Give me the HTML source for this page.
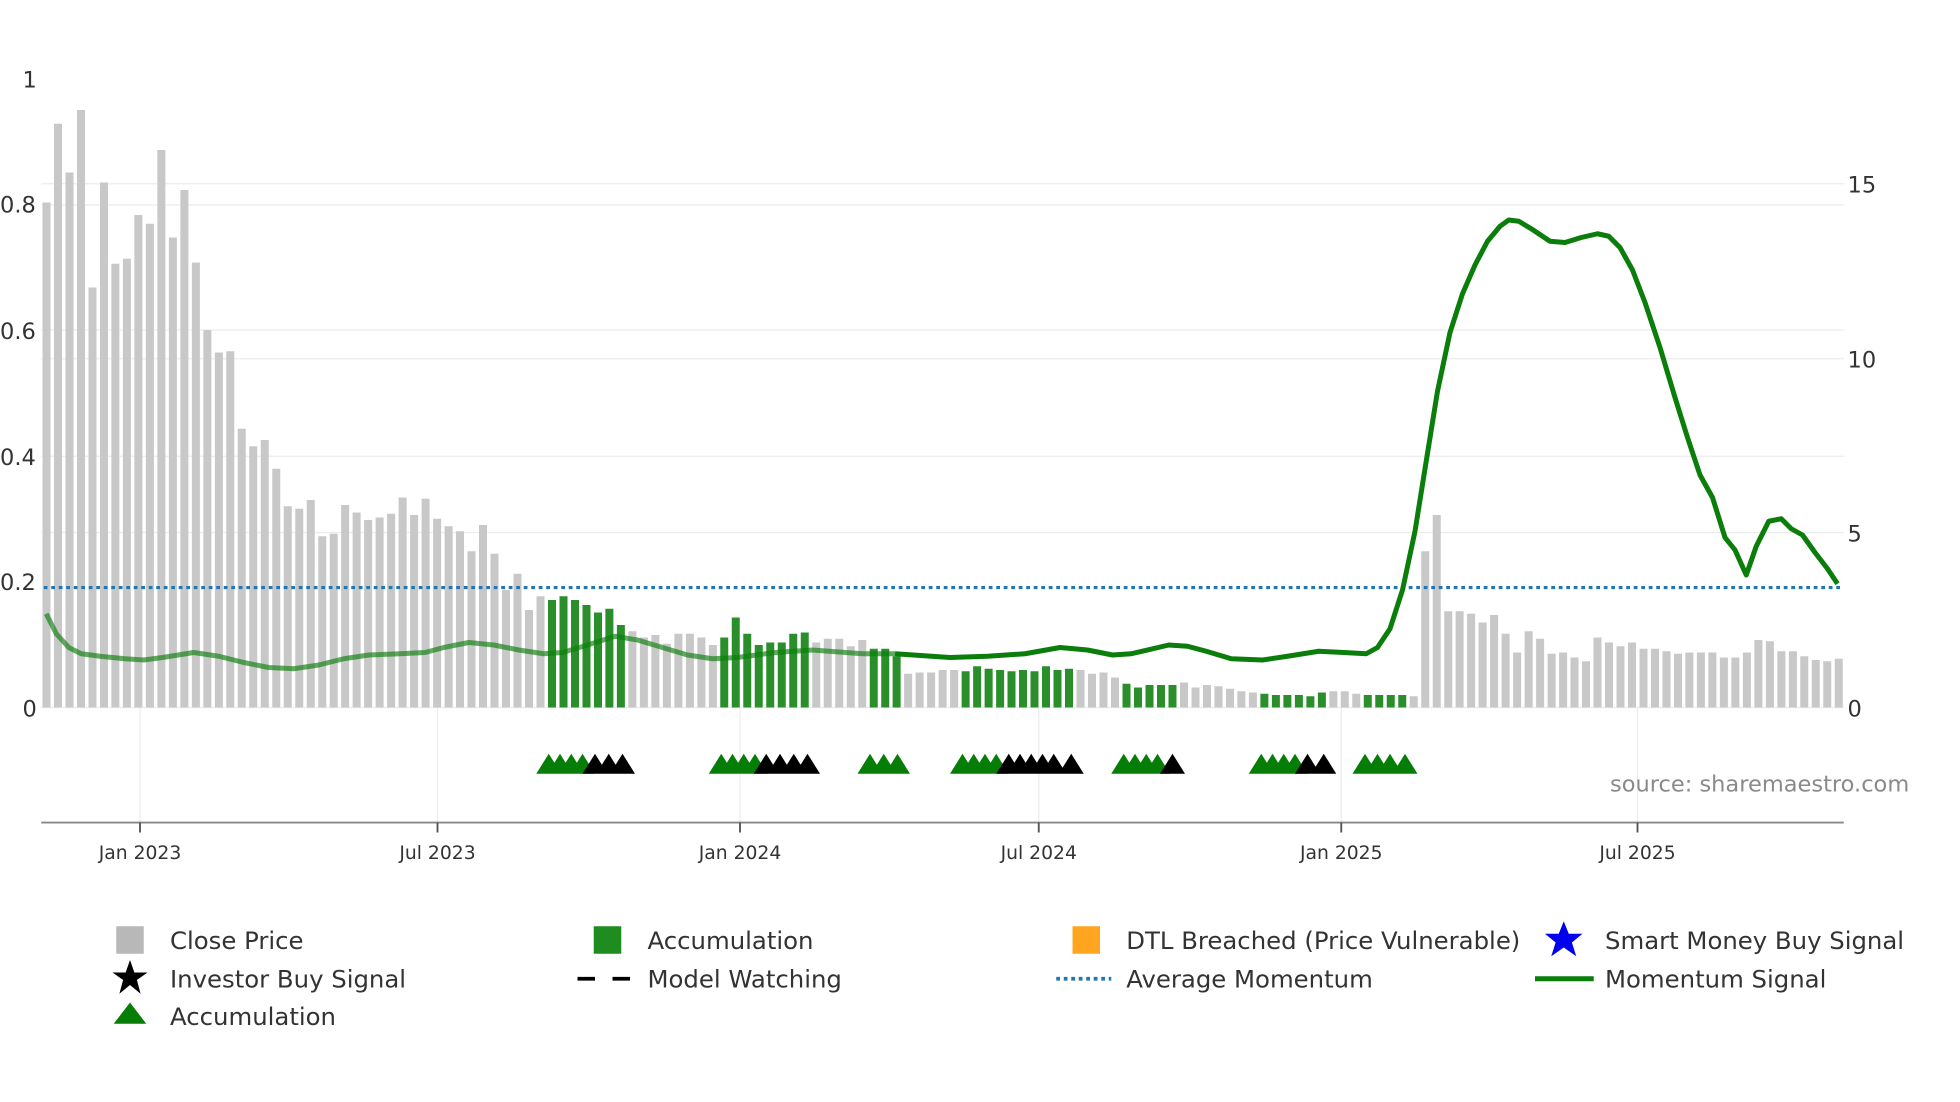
<!DOCTYPE html>
<html><head><meta charset="utf-8"><style>
html,body{margin:0;padding:0;background:#fff;width:1960px;height:1102px;overflow:hidden}
svg{display:block}
text{font-family:"DejaVu Sans","Liberation Sans",sans-serif}
</style></head><body>
<svg width="1960" height="1102" viewBox="0 0 1568 881.6" xmlns="http://www.w3.org/2000/svg">
<g stroke="#ececec" stroke-width="1">
<line x1="33" y1="147" x2="1475" y2="147"/><line x1="33" y1="164" x2="1475" y2="164"/>
<line x1="33" y1="264" x2="1475" y2="264"/><line x1="33" y1="287" x2="1475" y2="287"/>
<line x1="33" y1="365" x2="1475" y2="365"/><line x1="33" y1="426" x2="1475" y2="426"/>
<line x1="33" y1="566" x2="1475" y2="566"/>
<line x1="112" y1="566" x2="112" y2="658"/><line x1="350" y1="566" x2="350" y2="658"/><line x1="592" y1="566" x2="592" y2="658"/><line x1="831" y1="566" x2="831" y2="658"/><line x1="1073" y1="566" x2="1073" y2="658"/><line x1="1310" y1="566" x2="1310" y2="658"/>
</g>
<path fill="#c8c8c8" d="M34,162h6.4V566h-6.4zM43.2,99h6.4V566h-6.4zM52.4,138h6.4V566h-6.4zM61.6,88h6.4V566h-6.4zM70.8,230h6.4V566h-6.4zM80,146h6.4V566h-6.4zM89.1,211h6.4V566h-6.4zM98.3,207h6.4V566h-6.4zM107.5,172h6.4V566h-6.4zM116.7,179h6.4V566h-6.4zM125.9,120h6.4V566h-6.4zM135.1,190h6.4V566h-6.4zM144.3,152h6.4V566h-6.4zM153.5,210h6.4V566h-6.4zM162.7,264h6.4V566h-6.4zM171.9,282h6.4V566h-6.4zM181,281h6.4V566h-6.4zM190.2,343h6.4V566h-6.4zM199.4,357h6.4V566h-6.4zM208.6,352h6.4V566h-6.4zM217.8,375h6.4V566h-6.4zM227,405h6.4V566h-6.4zM236.2,407h6.4V566h-6.4zM245.4,400h6.4V566h-6.4zM254.6,429h6.4V566h-6.4zM263.8,427h6.4V566h-6.4zM272.9,404h6.4V566h-6.4zM282.1,410h6.4V566h-6.4zM291.3,416h6.4V566h-6.4zM300.5,414h6.4V566h-6.4zM309.7,411h6.4V566h-6.4zM318.9,398h6.4V566h-6.4zM328.1,412h6.4V566h-6.4zM337.3,399h6.4V566h-6.4zM346.5,415h6.4V566h-6.4zM355.7,421h6.4V566h-6.4zM364.8,425h6.4V566h-6.4zM374,441h6.4V566h-6.4zM383.2,420h6.4V566h-6.4zM392.4,443h6.4V566h-6.4zM401.6,472h6.4V566h-6.4zM410.8,459h6.4V566h-6.4zM420,488h6.4V566h-6.4zM429.2,477h6.4V566h-6.4z
M502.7,505h6.4V566h-6.4zM511.9,510h6.4V566h-6.4zM521.1,508h6.4V566h-6.4zM530.3,515h6.4V566h-6.4zM539.5,507h6.4V566h-6.4zM548.7,507h6.4V566h-6.4zM557.9,510h6.4V566h-6.4zM567.1,516h6.4V566h-6.4z
M649.8,514h6.4V566h-6.4zM659,511h6.4V566h-6.4zM668.2,511h6.4V566h-6.4zM677.4,517h6.4V566h-6.4zM686.6,512h6.4V566h-6.4z
M723.3,539h6.4V566h-6.4zM732.5,538h6.4V566h-6.4zM741.7,538h6.4V566h-6.4zM750.9,536h6.4V566h-6.4zM760.1,536h6.4V566h-6.4z
M861.2,536h6.4V566h-6.4zM870.4,539h6.4V566h-6.4zM879.6,538h6.4V566h-6.4zM888.8,542h6.4V566h-6.4z
M944,546h6.4V566h-6.4zM953.2,550h6.4V566h-6.4zM962.4,548h6.4V566h-6.4zM971.6,549h6.4V566h-6.4zM980.8,551h6.4V566h-6.4zM989.9,553h6.4V566h-6.4zM999.1,554h6.4V566h-6.4z
M1063.5,553h6.4V566h-6.4zM1072.6,553h6.4V566h-6.4zM1081.8,555h6.4V566h-6.4z
M1127.8,557h6.4V566h-6.4zM1137,441h6.4V566h-6.4zM1146.2,412h6.4V566h-6.4zM1155.4,489h6.4V566h-6.4zM1164.5,489h6.4V566h-6.4zM1173.7,491h6.4V566h-6.4zM1182.9,498h6.4V566h-6.4zM1192.1,492h6.4V566h-6.4zM1201.3,507h6.4V566h-6.4zM1210.5,522h6.4V566h-6.4zM1219.7,505h6.4V566h-6.4zM1228.9,511h6.4V566h-6.4zM1238.1,523h6.4V566h-6.4zM1247.3,522h6.4V566h-6.4zM1256.4,526h6.4V566h-6.4zM1265.6,529h6.4V566h-6.4zM1274.8,510h6.4V566h-6.4zM1284,514h6.4V566h-6.4zM1293.2,517h6.4V566h-6.4zM1302.4,514h6.4V566h-6.4zM1311.6,519h6.4V566h-6.4zM1320.8,519h6.4V566h-6.4zM1330,521h6.4V566h-6.4zM1339.2,523h6.4V566h-6.4zM1348.3,522h6.4V566h-6.4zM1357.5,522h6.4V566h-6.4zM1366.7,522h6.4V566h-6.4zM1375.9,526h6.4V566h-6.4zM1385.1,526h6.4V566h-6.4zM1394.3,522h6.4V566h-6.4zM1403.5,512h6.4V566h-6.4zM1412.7,513h6.4V566h-6.4zM1421.9,521h6.4V566h-6.4zM1431.1,521h6.4V566h-6.4zM1440.2,525h6.4V566h-6.4zM1449.4,528h6.4V566h-6.4zM1458.6,529h6.4V566h-6.4zM1467.8,527h6.4V566h-6.4z"/>
<path fill="#2a8f2a" d="M438.4,480h6.4V566h-6.4zM447.6,477h6.4V566h-6.4zM456.8,480h6.4V566h-6.4zM466,484h6.4V566h-6.4zM475.2,490h6.4V566h-6.4zM484.3,487h6.4V566h-6.4zM493.5,500h6.4V566h-6.4z
M576.2,510h6.4V566h-6.4zM585.4,494h6.4V566h-6.4zM594.6,507h6.4V566h-6.4zM603.8,516h6.4V566h-6.4zM613,514h6.4V566h-6.4zM622.2,514h6.4V566h-6.4zM631.4,507h6.4V566h-6.4zM640.6,506h6.4V566h-6.4z
M695.8,519h6.4V566h-6.4zM705,519h6.4V566h-6.4zM714.1,525h6.4V566h-6.4z
M769.3,537h6.4V566h-6.4zM778.5,533h6.4V566h-6.4zM787.7,535h6.4V566h-6.4zM796.9,536h6.4V566h-6.4zM806,537h6.4V566h-6.4zM815.2,536h6.4V566h-6.4zM824.4,537h6.4V566h-6.4zM833.6,533h6.4V566h-6.4zM842.8,536h6.4V566h-6.4zM852,535h6.4V566h-6.4z
M898,547h6.4V566h-6.4zM907.2,550h6.4V566h-6.4zM916.4,548h6.4V566h-6.4zM925.6,548h6.4V566h-6.4zM934.8,548h6.4V566h-6.4z
M1008.3,555h6.4V566h-6.4zM1017.5,556h6.4V566h-6.4zM1026.7,556h6.4V566h-6.4zM1035.9,556h6.4V566h-6.4zM1045.1,557h6.4V566h-6.4zM1054.3,554h6.4V566h-6.4z
M1091,556h6.4V566h-6.4zM1100.2,556h6.4V566h-6.4zM1109.4,556h6.4V566h-6.4zM1118.6,556h6.4V566h-6.4z"/>
<line x1="35" y1="470" x2="1472" y2="470" stroke="#1f77b4" stroke-width="2.5" stroke-dasharray="3,3"/>
<polyline fill="none" stroke="#0a7d0a" stroke-opacity="0.65" stroke-width="4" stroke-linejoin="round" points="37,491 45,507 55,518 65,523 80,525 100,527 115,528 130,526 155,522 175,525 195,530 215,534 235,535 255,532 275,527 295,524 320,523 340,522 355,518 375,514 395,516 415,520 435,523 450,522 470,516 492,509 510,512 530,518 550,524 570,527 590,526 620,522 650,520 690,523 716,523"/>
<polyline fill="none" stroke="#0a7d0a" stroke-width="4" stroke-linejoin="round" points="716,523 760,526 790,525 820,523 848,518 870,520 890,524 905,523 935,516 950,517 965,521 985,527 1010,528 1030,525 1055,521 1075,522 1093,523 1102,518 1112,503 1122,472 1132,425 1140,375 1150,313 1160,266 1170,235 1180,212 1190,193 1200,181 1207,176 1215,177 1225,183 1240,193 1252,194 1265,190 1278,187 1287,189 1296,198 1306,216 1316,242 1328,278 1340,318 1350,350 1360,380 1370,398 1380,430 1388,440 1397,460 1405,437 1415,417 1425,415 1433,423 1442,428 1452,442 1462,455 1470,467"/>
<g fill="#067d06">
<path d="M429,619l10,-16l10,16zM438,619l10,-16l10,16zM447,619l10,-16l10,16zM456,619l10,-16l10,16z"/>
<path d="M567,619l10,-16l10,16zM576,619l10,-16l10,16zM585,619l10,-16l10,16zM594,619l10,-16l10,16z"/>
<path d="M686,619l10,-16l10,16zM697,619l10,-16l10,16zM708,619l10,-16l10,16z"/>
<path d="M760,619l10,-16l10,16zM769,619l10,-16l10,16zM778,619l10,-16l10,16zM787,619l10,-16l10,16z"/>
<path d="M889,619l10,-16l10,16zM898,619l10,-16l10,16zM907,619l10,-16l10,16zM916,619l10,-16l10,16z"/>
<path d="M999,619l10,-16l10,16zM1008,619l10,-16l10,16zM1017,619l10,-16l10,16zM1026,619l10,-16l10,16z"/>
<path d="M1082,619l10,-16l10,16zM1092,619l10,-16l10,16zM1102,619l10,-16l10,16zM1114,619l10,-16l10,16z"/>
</g>
<g fill="#000">
<path d="M466,619l10,-16l10,16zM477,619l10,-16l10,16zM488,619l10,-16l10,16z"/>
<path d="M603,619l10,-16l10,16zM614,619l10,-16l10,16zM625,619l10,-16l10,16zM636,619l10,-16l10,16z"/>
<path d="M797,619l10,-16l10,16zM806,619l10,-16l10,16zM815,619l10,-16l10,16zM824,619l10,-16l10,16zM833,619l10,-16l10,16zM847,619l10,-16l10,16z"/>
<path d="M928,619l10,-16l10,16z"/>
<path d="M1036,619l10,-16l10,16zM1049,619l10,-16l10,16z"/>
</g>
<line x1="33" y1="658" x2="1475" y2="658" stroke="#888" stroke-width="1.5"/>
<g stroke="#555" stroke-width="1.5"><line x1="112" y1="658" x2="112" y2="666"/><line x1="350" y1="658" x2="350" y2="666"/><line x1="592" y1="658" x2="592" y2="666"/><line x1="831" y1="658" x2="831" y2="666"/><line x1="1073" y1="658" x2="1073" y2="666"/><line x1="1310" y1="658" x2="1310" y2="666"/></g>
<g font-size="15" fill="#333" text-anchor="middle"><text x="112" y="687">Jan 2023</text><text x="350" y="687">Jul 2023</text><text x="592" y="687">Jan 2024</text><text x="831" y="687">Jul 2024</text><text x="1073" y="687">Jan 2025</text><text x="1310" y="687">Jul 2025</text></g>
<g font-size="18" fill="#333"><text x="18" y="70">1</text><text x="0" y="170">0.8</text><text x="0" y="271">0.6</text><text x="0" y="372">0.4</text><text x="0" y="472">0.2</text><text x="18" y="573">0</text>
<text x="1478" y="154">15</text><text x="1478" y="294">10</text><text x="1478" y="433">5</text><text x="1478" y="573">0</text></g>
<text x="1288" y="633" font-size="18" fill="#8a8a8a">source: sharemaestro.com</text>
<g font-size="19.5" fill="#333">
<rect x="93" y="741" width="22" height="22" fill="#b8b8b8"/><text x="136" y="759">Close Price</text>
<polygon points="104,768 107.5,778 118,778 109.5,784 112.5,795 104,788 95.5,795 98.5,784 90,778 100.5,778" fill="#000"/><text x="136" y="790">Investor Buy Signal</text>
<path d="M91,819l13,-17l13,17z" fill="#067d06"/><text x="136" y="820">Accumulation</text>
<rect x="475" y="741" width="22" height="22" fill="#1e8c1e"/><text x="518" y="759">Accumulation</text>
<path d="M462,783h14M490,783h14" stroke="#000" stroke-width="3"/><text x="518" y="790">Model Watching</text>
<rect x="858" y="741" width="22" height="22" fill="#ffa51f"/><text x="901" y="759">DTL Breached (Price Vulnerable)</text>
<line x1="845" y1="783" x2="889" y2="783" stroke="#1f77b4" stroke-width="3" stroke-dasharray="3,3"/><text x="901" y="790">Average Momentum</text>
<polygon points="1251,737 1255,747 1266,747 1257.5,754 1261,765 1251,758 1241,765 1244.5,754 1236,747 1247,747" fill="#0000ee"/><text x="1284" y="759">Smart Money Buy Signal</text>
<line x1="1228" y1="783" x2="1275" y2="783" stroke="#0a7d0a" stroke-width="4"/><text x="1284" y="790">Momentum Signal</text>
</g>
</svg>
</body></html>
